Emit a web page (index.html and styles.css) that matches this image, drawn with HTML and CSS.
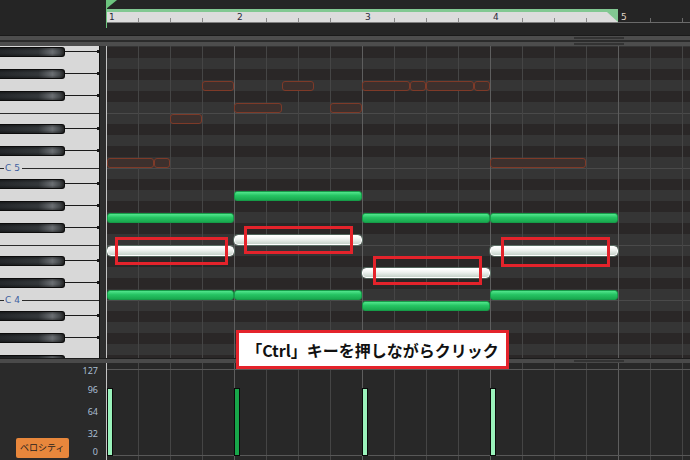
FILE: index.html
```html
<!DOCTYPE html>
<html lang="ja">
  <head>
    <meta charset="UTF-8" />
    <meta name="viewport" content="width=device-width, initial-scale=1.0" />
    <title>Piano Roll</title>
    <link rel="stylesheet" href="styles.css">
  </head>
  <body>
    <div class="app">
      <header class="head">
        <div class="ruler">
          <div class="measure"><span class="beat">1</span><span class="beat tick"></span><span class="beat tick"></span><span class="beat tick"></span></div>
          <div class="measure"><span class="beat">2</span><span class="beat tick"></span><span class="beat tick"></span><span class="beat tick"></span></div>
          <div class="measure"><span class="beat">3</span><span class="beat tick"></span><span class="beat tick"></span><span class="beat tick"></span></div>
          <div class="measure end"><span class="beat">4</span><span class="beat tick"></span><span class="beat tick"></span><span class="beat tick"></span></div>
          <div class="ruler-rest"><span class="beat">5</span><span class="beat tick"></span><span class="beat tick"></span></div>
        </div>
      </header>

      <div class="bars">
        <div class="bar"><span class="thumb"></span></div>
        <div class="bar"><span class="thumb"></span></div>
      </div>

      <main class="roll">
        <div class="piano"><div class="keys" id="keys"></div></div>
        <div class="gutter"></div>
        <div class="grid">
          <div class="rows" id="rows"></div>
          <div class="lines"></div>
          <div class="notes" id="notes"></div>
        </div>
      </main>

      <div class="sep"><span class="thumb"></span></div>

      <section class="vel">
        <div class="vel-side">
          <div class="vel-btn-col"><span class="vel-btn">ベロシティ</span></div>
          <div class="vel-scale">
            <span>127</span><span>96</span><span>64</span><span>32</span><span>0</span>
          </div>
        </div>
        <div class="vel-grid">
          <div class="lines vel-lines"></div>
          <div class="notes" id="vels"></div>
        </div>
      </section>

      <span class="flag"></span>
      <span class="flag-line"></span>

      <div class="mark mark-1"></div>
      <div class="mark mark-2"></div>
      <div class="mark mark-3"></div>
      <div class="mark mark-4"></div>

      <div class="tip">「Ctrl」キーを押しながらクリック</div>
    </div>

    <script>
      // rows top to bottom, first one is cut off by 10px
      const names = [
        "B5", "A#5", "A5", "G#5", "G5", "F#5", "F5", "E5", "D#5", "D5",
        "C#5", "C5", "B4", "A#4", "A4", "G#4", "G4", "F#4", "F4", "E4",
        "D#4", "D4", "C#4", "C4", "B3", "A#3", "A3", "G#3", "G3", "F#3",
      ];

      const keys = document.getElementById("keys");
      const rows = document.getElementById("rows");

      names.forEach(function (name) {
        const black = name.includes("#");
        const edge = name[0] === "E" || name[0] === "B";

        const key = document.createElement("div");
        key.className = "key" + (edge ? " edge" : "");
        if (black) {
          key.innerHTML = '<span class="bk"></span><span class="wire"></span>';
        } else if (name[0] === "C") {
          key.classList.add("c");
          key.innerHTML = '<span class="lbl">C ' + name.slice(1) + "</span>";
        }
        keys.appendChild(key);

        const row = document.createElement("div");
        row.className = "row" + (black ? " dark" : "") + (edge ? " edge" : "");
        rows.appendChild(row);
      });

      // [x, width, pitch]
      const ghost = [
        [96, 32, "G5"], [176, 32, "G5"], [256, 48, "G5"], [304, 16, "G5"],
        [320, 48, "G5"], [368, 16, "G5"], [128, 48, "F5"], [224, 32, "F5"],
        [64, 32, "E5"], [1, 47, "C5"], [48, 16, "C5"], [384, 96, "C5"],
      ];
      const green = [
        [1, 127, "G4"], [1, 127, "C4"], [128, 128, "A4"], [128, 128, "C4"],
        [256, 128, "G4"], [256, 128, "B3"], [384, 128, "G4"], [384, 128, "C4"],
      ];
      const selected = [
        [1, 127, "E4"], [128, 128, "F4"], [256, 128, "D4"], [384, 128, "E4"],
      ];

      const notes = document.getElementById("notes");

      function addNote(cls, note) {
        const el = document.createElement("div");
        el.className = "note " + cls;
        el.style.left = note[0] + "px";
        el.style.width = note[1] + "px";
        el.style.top = names.indexOf(note[2]) * 11 - 9 + "px";
        notes.appendChild(el);
      }

      ghost.forEach((n) => addNote("ghost", n));
      green.forEach((n) => addNote("on", n));
      selected.forEach((n) => addNote("sel", n));

      const vels = document.getElementById("vels");
      [[1, ""], [128, "dim"], [256, ""], [384, ""]].forEach(function (v) {
        const bar = document.createElement("div");
        bar.className = "vbar " + v[1];
        bar.style.left = v[0] + "px";
        vels.appendChild(bar);
      });
    </script>
  </body>
</html>
```

FILE: styles.css
```css
body {
  margin: 0;
  background-color: #252525;
  font-family: "Noto Sans", "Noto Sans CJK JP", sans-serif;
}
.app {
  position: relative;
  width: 690px;
  height: 460px;
  overflow: hidden;
  background-color: #252525;
}

/* ruler */
.head {
  height: 36px;
  box-sizing: border-box;
  padding: 9px 0 0 106px;
  border-bottom: 1px solid #1a1a1a;
}
.ruler {
  display: flex;
  height: 14px;
}
.measure {
  position: relative;
  display: flex;
  width: 128px;
  box-sizing: border-box;
  border-top: 3px solid #82c892;
  border-bottom: 1px solid #808080;
  background-color: #dcdcdc;
}
.measure.end::after {
  content: "";
  position: absolute;
  right: 0;
  top: 0;
  width: 11px;
  height: 10px;
  background-color: #82c892;
  clip-path: polygon(0 0, 100% 0, 100% 100%);
}
.beat {
  width: 32px;
  height: 10px;
  box-sizing: border-box;
  padding-left: 3px;
  font: 9px/10px "DejaVu Sans", sans-serif;
  color: #2a2a3a;
}
.tick {
  background: linear-gradient(#8a8a8a, #8a8a8a) left bottom / 1px 4px no-repeat;
}
.ruler-rest {
  flex: 1;
  display: flex;
  padding-top: 3px;
  border-bottom: 1px solid #6a6a6a;
}
.ruler-rest .beat {
  color: #e0d8c8;
}
.ruler-rest .tick {
  background: linear-gradient(#6a6a6a, #6a6a6a) left bottom / 1px 4px no-repeat;
}
.flag {
  position: absolute;
  left: 106px;
  top: 0;
  width: 11px;
  height: 9px;
  background-color: #6cc47e;
  clip-path: polygon(0 0, 100% 0, 0 100%);
}
.flag-line {
  position: absolute;
  left: 106px;
  top: 0;
  width: 1px;
  height: 28px;
  background-color: #6cc47e;
}

/* scroll bars */
.bars {
  display: flex;
  flex-direction: column;
  gap: 2px;
  background-color: #2b2b2b;
}
.bar {
  height: 4px;
  background-color: #4d4d4d;
}
.thumb {
  display: block;
  width: 50px;
  height: 2px;
  margin: 1px 0 0 574px;
  background-color: #333;
}
.sep {
  height: 5px;
  box-sizing: border-box;
  border-top: 1px solid #1c1c1c;
  background-color: #4a4a4a;
}

/* piano roll */
.roll {
  display: flex;
  height: 312px;
  overflow: hidden;
}
.piano {
  width: 100px;
  flex: none;
  box-sizing: border-box;
  border-right: 1px solid #111;
  background-color: #d8d8d8;
  overflow: hidden;
}
.gutter {
  width: 6px;
  flex: none;
  background-color: #2e2e2e;
}
.grid {
  position: relative;
  flex: 1;
  overflow: hidden;
}
.keys,
.rows {
  margin-top: -10px;
}
.key {
  display: flex;
  align-items: flex-start;
  height: 11px;
  box-sizing: border-box;
}
.key.edge {
  border-top: 1px solid #2a2a2a;
}
.key.c {
  align-items: flex-end;
}
.bk {
  width: 65px;
  height: 10px;
  box-sizing: border-box;
  border: 1px solid #0c0c0c;
  border-left: 0;
  border-radius: 0 3px 3px 0;
  background:
    linear-gradient(rgba(0, 0, 0, 0.35), transparent 35%, transparent 65%, rgba(0, 0, 0, 0.35)),
    linear-gradient(90deg, #25282b 0%, #33373a 60%, #6a6e72 82%, #45494c 93%, #232323 100%);
}
.wire {
  flex: 1;
  height: 3px;
  margin-top: 3px;
  border-right: 2px solid #1a1a1a;
  background: linear-gradient(#1a1a1a, #1a1a1a) center / 100% 1px no-repeat;
}
.lbl {
  position: relative;
  z-index: 1;
  height: 10px;
  margin: 0 0 -5px 4px;
  padding: 0 2px 0 1px;
  font: 9px/10px "DejaVu Sans", sans-serif;
  color: #3d5fa0;
  background-color: #d8d8d8;
}
.row {
  height: 11px;
  box-sizing: border-box;
  background-color: #353535;
}
.row.dark {
  background-color: #2a2727;
}
.row.edge {
  border-top: 1px solid #4a4a4a;
}
.lines {
  position: absolute;
  inset: 0;
  background:
    linear-gradient(#c4c4c4, #c4c4c4) 0 0 / 1px 100% no-repeat,
    repeating-linear-gradient(90deg, #5e5e5e 0 1px, transparent 1px 128px),
    repeating-linear-gradient(90deg, #454545 0 1px, transparent 1px 32px);
}
.notes {
  position: absolute;
  inset: 0;
}
.note {
  position: absolute;
  height: 10px;
  box-sizing: border-box;
  border-radius: 3px;
}
.note.ghost {
  border: 1px solid #7e3a28;
  background-color: #3d302d;
}
.note.on {
  border: 1px solid #169c48;
  background: linear-gradient(#52e68d, #26c463 45%, #19a94f);
}
.note.sel {
  border: 1.5px solid #fff;
  border-radius: 4px;
  background: linear-gradient(#ffffff, #eef2ef 40%, #c6d3ca);
  box-shadow: 0 0 0 1px rgba(110, 150, 130, 0.5);
}

/* velocity lane */
.vel {
  display: flex;
  height: 97px;
}
.vel-side {
  width: 106px;
  flex: none;
  display: flex;
  background-color: #2a2a2a;
}
.vel-btn-col {
  width: 54px;
  display: flex;
  align-items: flex-end;
  padding: 0 0 2px 16px;
}
.vel-btn {
  display: block;
  width: 53px;
  height: 20px;
  box-sizing: border-box;
  padding-left: 4px;
  border-radius: 2px;
  background-color: #e8873c;
  color: #1e1e1e;
  font: 9px/20px "Noto Sans CJK JP", sans-serif;
}
.vel-scale {
  flex: 1;
  display: grid;
  grid-template-rows: 19px 22px 22px 18px 10px;
  padding: 3px 8px 0 0;
  text-align: right;
  font: 9px/10px "Noto Sans", sans-serif;
  color: #a9bdd3;
}
.vel-grid {
  position: relative;
  flex: 1;
  background-color: #282828;
}
.vel-lines {
  background:
    linear-gradient(#c4c4c4, #c4c4c4) 0 0 / 1px 100% no-repeat,
    linear-gradient(#585858, #585858) 0 6px / 100% 1px no-repeat,
    linear-gradient(#585858, #585858) 0 92px / 100% 1px no-repeat,
    repeating-linear-gradient(90deg, #5e5e5e 0 1px, transparent 1px 128px),
    repeating-linear-gradient(90deg, #454545 0 1px, transparent 1px 32px);
}
.vbar {
  position: absolute;
  top: 25px;
  width: 6px;
  height: 68px;
  box-sizing: border-box;
  border: 1px solid #0a0a0a;
  background-color: #9af2bb;
}
.vbar.dim {
  background-color: #18a64a;
}

/* annotations */
.mark {
  position: absolute;
  box-sizing: border-box;
  border: 3px solid #e4232b;
}
.mark-1 {
  left: 115px;
  top: 237px;
  width: 113px;
  height: 28px;
}
.mark-2 {
  left: 244px;
  top: 226px;
  width: 109px;
  height: 28px;
}
.mark-3 {
  left: 373px;
  top: 256px;
  width: 109px;
  height: 29px;
}
.mark-4 {
  left: 501px;
  top: 237px;
  width: 109px;
  height: 30px;
}
.tip {
  position: absolute;
  left: 236px;
  top: 330px;
  width: 273px;
  height: 39px;
  box-sizing: border-box;
  display: flex;
  align-items: center;
  justify-content: center;
  border: 3px solid #e4232b;
  background-color: #fff;
  color: #111;
  font: bold 16px "Noto Sans CJK JP", sans-serif;
}
```
